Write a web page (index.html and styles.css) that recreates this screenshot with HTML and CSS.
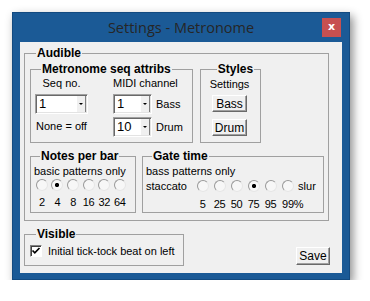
FILE: index.html
```html
<!DOCTYPE html>
<html lang="en">
<head>
    <meta charset="UTF-8">
    <title>Settings - Metronome</title>
    <link rel="stylesheet" href="styles.css">
</head>
<body>
    <div class="window">
        <div class="titlebar">
            <span class="title">Settings - Metronome</span>
            <span class="close">x</span>
        </div>
        <div class="client">
            <fieldset class="group audible">
                <legend>Audible</legend>
                <div class="top-row">
                    <fieldset class="group seq">
                        <legend>Metronome seq attribs</legend>
                        <div class="seq-cols">
                            <div class="col-seq">
                                <div class="lbl">Seq no.</div>
                                <div class="combo wide"><span class="val">1</span><span class="arrow"><i></i></span></div>
                                <div class="lbl none-off">None = off</div>
                            </div>
                            <div class="col-midi">
                                <div class="lbl">MIDI channel</div>
                                <div class="combo-row">
                                    <div class="combo"><span class="val">1</span><span class="arrow"><i></i></span></div>
                                    <span>Bass</span>
                                </div>
                                <div class="combo-row second">
                                    <div class="combo"><span class="val">10</span><span class="arrow"><i></i></span></div>
                                    <span>Drum</span>
                                </div>
                            </div>
                        </div>
                    </fieldset>
                    <fieldset class="group styles">
                        <legend>Styles</legend>
                        <div class="lbl">Settings</div>
                        <button class="btn bass">Bass</button>
                        <button class="btn drum">Drum</button>
                    </fieldset>
                </div>
                <div class="bottom-row">
                    <fieldset class="group notes">
                        <legend>Notes per bar</legend>
                        <div class="lbl hint">basic patterns only</div>
                        <div class="notes-grid">
                            <span class="radio"></span>
                            <span class="radio on"></span>
                            <span class="radio"></span>
                            <span class="radio"></span>
                            <span class="radio"></span>
                            <span class="radio"></span>
                            <span>2</span><span>4</span><span>8</span><span>16</span><span>32</span><span>64</span>
                        </div>
                    </fieldset>
                    <fieldset class="group gate">
                        <legend>Gate time</legend>
                        <div class="lbl hint">bass patterns only</div>
                        <div class="gate-grid">
                            <span class="side">staccato</span>
                            <span class="radio"></span>
                            <span class="radio"></span>
                            <span class="radio"></span>
                            <span class="radio on"></span>
                            <span class="radio"></span>
                            <span class="radio"></span>
                            <span class="side slur">slur</span>
                            <span></span>
                            <span>5</span><span>25</span><span>50</span><span>75</span><span>95</span><span class="pct">99%</span>
                            <span></span>
                        </div>
                    </fieldset>
                </div>
            </fieldset>
            <div class="footer-row">
                <fieldset class="group visible">
                    <legend>Visible</legend>
                    <label class="check-row">
                        <span class="checkbox"><svg width="10" height="10" viewBox="0 0 10 10"><path d="M1.5 4.5 L3.8 6.8 L8.5 2" stroke="#000" stroke-width="1.7" fill="none"/></svg></span>
                        Initial tick-tock beat on left
                    </label>
                </fieldset>
                <button class="btn save">Save</button>
            </div>
        </div>
    </div>
</body>
</html>
```

FILE: styles.css
```css
body {
    margin: 0;
    padding: 12px 0 0 12px;
    background-color: #fff;
    font-family: "Liberation Sans", Arial, sans-serif;
    font-size: 11px;
    color: #000;
}
.window {
    width: 338px;
    height: 268px;
    box-sizing: border-box;
    background-color: #1b5a96;
    border: 1px solid #134a80;
    box-shadow: 3px 4px 9px rgba(0, 0, 0, 0.45);
    display: flex;
    flex-direction: column;
}
.titlebar {
    height: 29px;
    display: grid;
    grid-template-columns: 1fr auto 1fr;
    align-items: start;
}
.title {
    grid-column: 2;
    font-family: "Open Sans", sans-serif;
    font-size: 14.5px;
    line-height: 30px;
    color: #262626;
}
.close {
    grid-column: 3;
    justify-self: end;
    margin: 5px 8px 0 0;
    width: 19px;
    height: 19px;
    background-color: #c75050;
    color: #fff;
    font: bold 11px/18px "DejaVu Sans", sans-serif;
    text-align: center;
}
.client {
    margin: 0 7px;
    height: 231px;
    box-sizing: border-box;
    background-color: #f0f0f0;
    padding: 4px 0 0 4px;
}
fieldset.group {
    margin: 0;
    padding: 0;
    min-width: 0;
    border: 1px solid #a0a0a0;
    box-sizing: border-box;
}
legend {
    margin-left: 6px;
    padding: 0 1px;
    font-weight: bold;
    font-size: 12px;
    line-height: 14px;
}
.lbl {
    line-height: 14px;
}
.audible {
    width: 305px;
    padding: 0 0 7px 5px !important;
}
.top-row {
    display: flex;
    gap: 7px;
    margin-top: 2px;
}
.seq {
    width: 163px;
    padding: 0 0 5px 4px !important;
}
.seq-cols {
    display: flex;
    gap: 25px;
}
.col-seq {
    width: 53px;
    display: flex;
    flex-direction: column;
    align-items: center;
}
.col-seq .combo {
    margin-top: 4px;
}
.none-off {
    margin-top: 5px;
}
.combo {
    display: flex;
    width: 39px;
    height: 20px;
    box-sizing: border-box;
    background-color: #fff;
    border: 1px solid;
    border-color: #a0a0a0 #fff #fff #a0a0a0;
    box-shadow: inset 1px 1px #696969, inset -1px -1px #e3e3e3;
    padding: 1px;
}
.combo.wide {
    width: 53px;
}
.combo .val {
    flex: 1;
    padding-left: 2px;
    font-size: 13px;
    line-height: 16px;
}
.combo .arrow {
    width: 8px;
    background-color: #f0f0f0;
    border-left: 1px solid #fff;
    border-right: 1px solid #808080;
    display: flex;
    align-items: center;
    justify-content: center;
}
.combo .arrow i {
    width: 0;
    height: 0;
    border-left: 2px solid transparent;
    border-right: 2px solid transparent;
    border-top: 2px solid #000;
}
.combo-row {
    display: flex;
    align-items: center;
    gap: 4px;
    margin-top: 4px;
}
.combo-row.second {
    margin-top: 3px;
}
.styles {
    width: 61px;
    padding: 0 2px 0 0 !important;
    text-align: center;
}
.styles .lbl {
    margin-top: 1px;
}
.btn {
    display: block;
    margin: 0;
    padding: 0;
    font-family: "Liberation Sans", Arial, sans-serif;
    font-size: 12px;
    line-height: 14px;
    color: #000;
    background-color: #f0f0f0;
    border: 1px solid;
    border-color: #fff #696969 #696969 #fff;
    box-shadow: inset -1px -1px #a0a0a0;
}
.btn.bass {
    width: 35px;
    height: 17px;
    margin: 4px auto 0;
}
.btn.drum {
    width: 35px;
    height: 17px;
    margin: 7px auto 0;
}
.bottom-row {
    display: flex;
    gap: 6px;
    margin-top: 6px;
}
.notes {
    width: 106px;
    padding: 0 0 1px 3px !important;
}
.gate {
    width: 182px;
    padding: 0 0 1px 3px !important;
}
.hint {
    margin-top: 1px;
}
.notes-grid {
    display: grid;
    grid-template-columns: repeat(6, 15.6px);
    justify-items: center;
    align-items: center;
    row-gap: 4px;
    margin-top: 1px;
    line-height: 14px;
    letter-spacing: -0.4px;
}
.gate-grid {
    display: grid;
    grid-template-columns: auto repeat(6, 17px) auto;
    justify-items: center;
    align-items: center;
    row-gap: 4px;
    margin-top: 1px;
    line-height: 14px;
    letter-spacing: -0.3px;
}
.gate-grid .side {
    justify-self: start;
    letter-spacing: 0;
}
.gate-grid .slur {
    padding-left: 2px;
}
.gate-grid .pct {
    justify-self: start;
    padding-left: 3px;
    white-space: nowrap;
}
.radio {
    width: 12px;
    height: 12px;
    box-sizing: border-box;
    border-radius: 50%;
    border: 1px solid;
    border-color: #999 #e6e6e6 #e6e6e6 #999;
    background-color: #f7f7f7;
}
.radio.on {
    background: radial-gradient(circle, #000 1.8px, #f7f7f7 2.4px);
}
.footer-row {
    display: flex;
    align-items: flex-end;
    margin-top: 6px;
}
.visible {
    width: 160px;
    padding: 0 0 7px 5px !important;
}
.check-row {
    display: flex;
    align-items: center;
    gap: 6px;
    margin-top: 3px;
    line-height: 14px;
    white-space: nowrap;
}
.checkbox {
    width: 12px;
    height: 12px;
    box-sizing: border-box;
    background-color: #fff;
    border: 1px solid;
    border-color: #808080 #fff #fff #808080;
    box-shadow: inset 1px 1px #404040;
    display: flex;
    align-items: center;
    justify-content: center;
}
.btn.save {
    width: 34px;
    height: 18px;
    margin: 0 12px 1px auto;
}
```
